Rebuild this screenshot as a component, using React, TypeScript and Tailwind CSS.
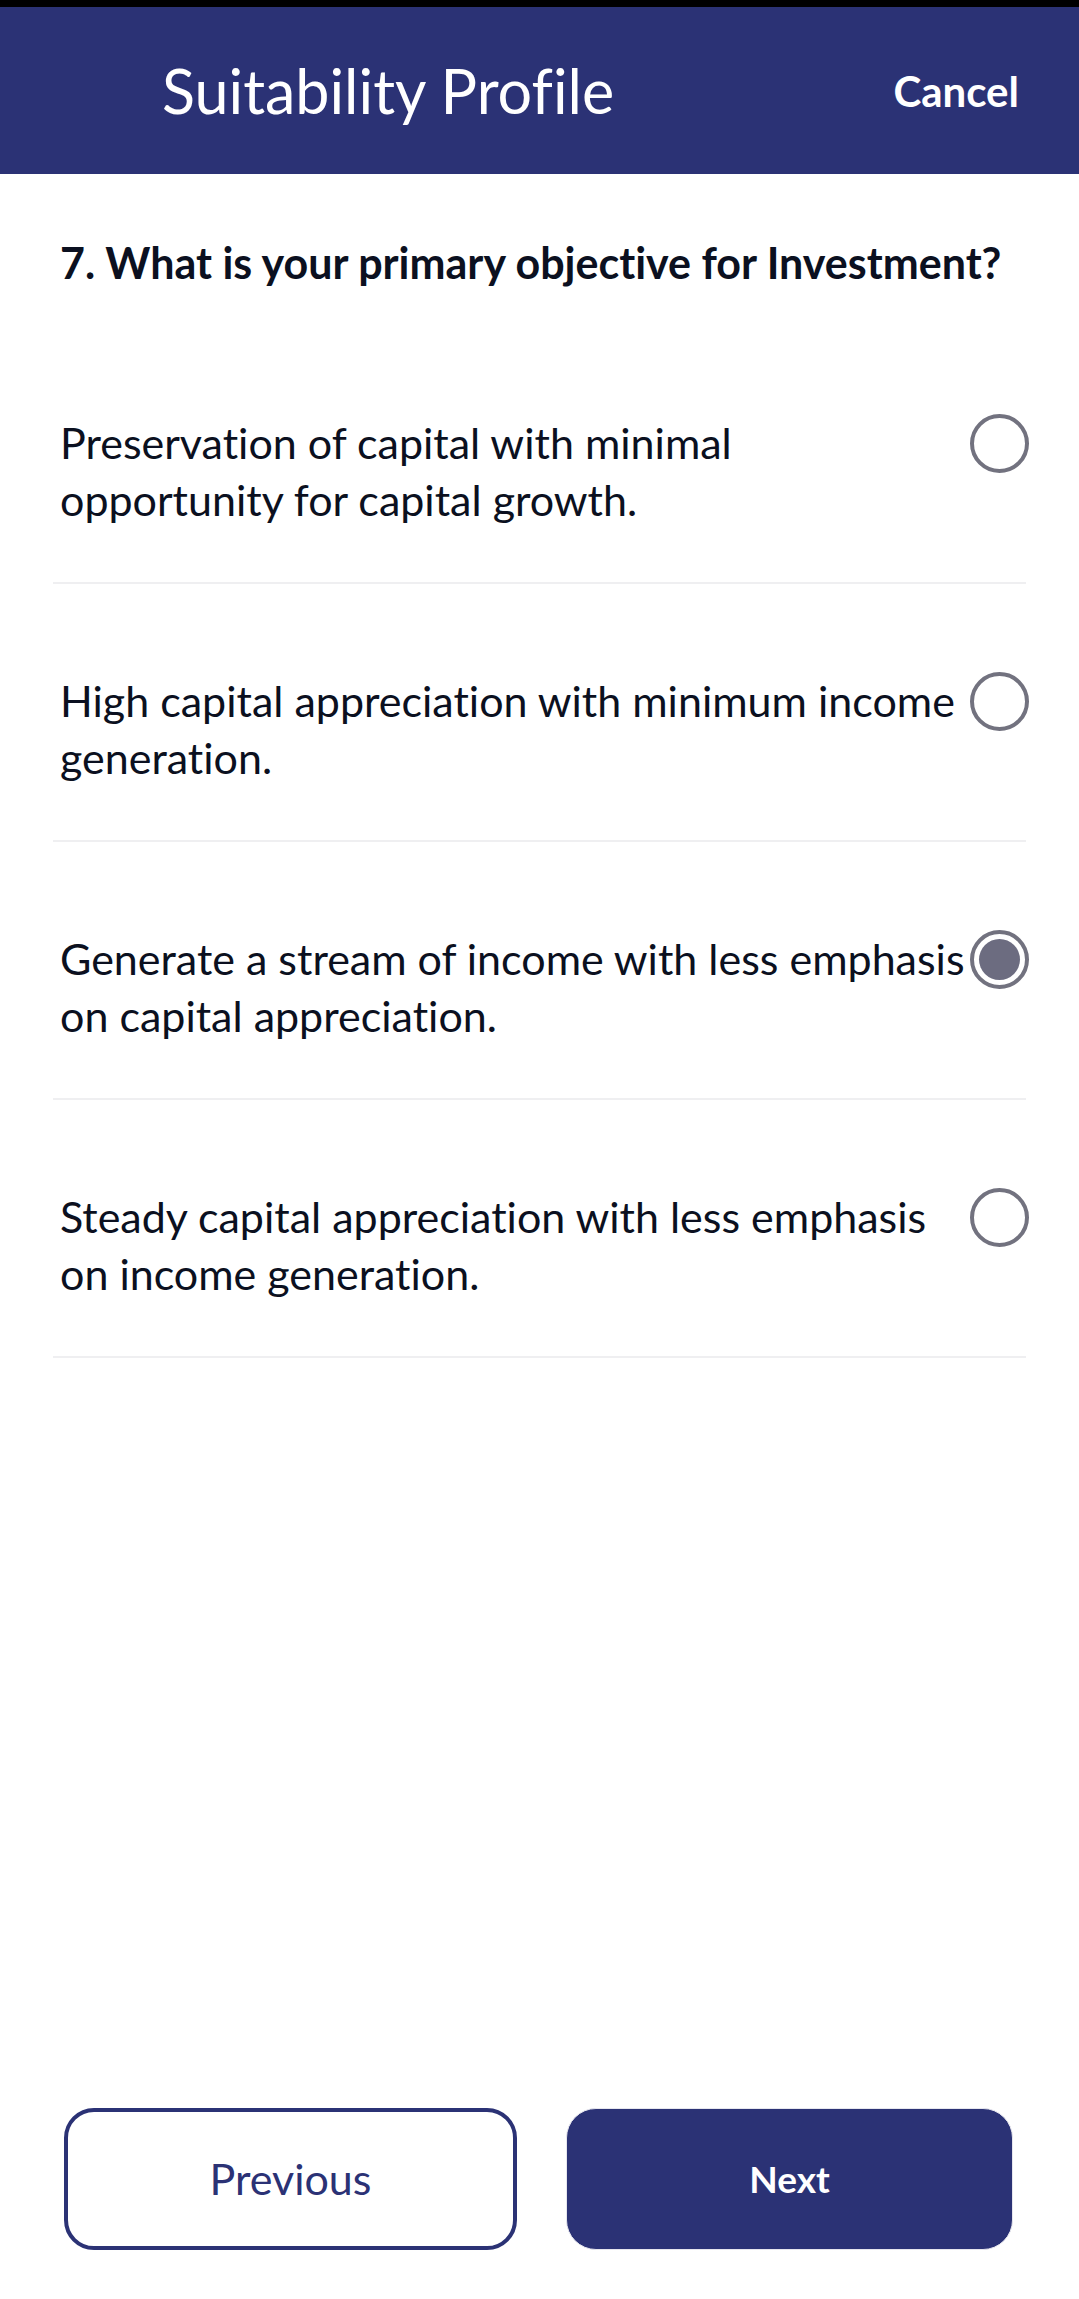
import { useState } from "react"

const opcoes = [
    ["Preservation of capital with minimal", "opportunity for capital growth."],
    ["High capital appreciation with minimum income", "generation."],
    ["Generate a stream of income with less emphasis", "on capital appreciation."],
    ["Steady capital appreciation with less emphasis", "on income generation."],
]

function Radio({ marcado }: { marcado: boolean }) {
    return (
        <div className="w-[59px] h-[59px] shrink-0 rounded-full border-[4px] border-[#72727f] p-[5px] -mr-[3px]">
            {marcado && <div className="w-full h-full rounded-full bg-[#6c6c80]" />}
        </div>
    )
}

function App() {

    const [selecionado, setSelecionado] = useState<number>(2)

    return (
        <div className="w-full h-[2299px] bg-white flex flex-col font-['Lato',sans-serif] [font-variant-ligatures:none]">
            <div className="h-[7px] bg-black" />

            <div className="h-[167px] bg-[#2b3275] flex items-center justify-between pl-[162px] pr-[60px]">
                <h1 className="text-[61px] text-white leading-none">Suitability Profile</h1>
                <button className="text-[42px] font-bold text-white leading-none">Cancel</button>
            </div>

            <p className="mt-[63px] pl-[60px] text-[43px] leading-[52px] font-bold text-[#0b1020]">
                7. What is your primary objective for Investment?
            </p>

            <div className="mt-[37px] flex flex-col">
                {opcoes.map((linhas, i) => (
                    <div
                        key={i}
                        className="mx-[53px] pt-[88px] pb-[54px] border-b-2 border-[#efeff1] flex items-start pl-[7px] cursor-pointer"
                        onClick={() => setSelecionado(i)}
                    >
                        <span className="flex-1 text-[43px] leading-[57px] text-[#0b1020] whitespace-nowrap">
                            {linhas[0]}
                            <br />
                            {linhas[1]}
                        </span>
                        <Radio marcado={selecionado === i} />
                    </div>
                ))}
            </div>

            <div className="flex-1" />

            <div className="flex gap-[49px] pl-[64px] pr-[66px] pb-[49px]">
                <button className="flex-1 h-[142px] rounded-[30px] border-[4px] border-[#2b3275] bg-white text-[43px] text-[#2b3275]">
                    Previous
                </button>
                <button className="flex-1 h-[142px] rounded-[30px] border border-[#e6e6ee] bg-[#2b3275] text-[37px] font-bold text-white">
                    Next
                </button>
            </div>
        </div>
    )
}

export default App
